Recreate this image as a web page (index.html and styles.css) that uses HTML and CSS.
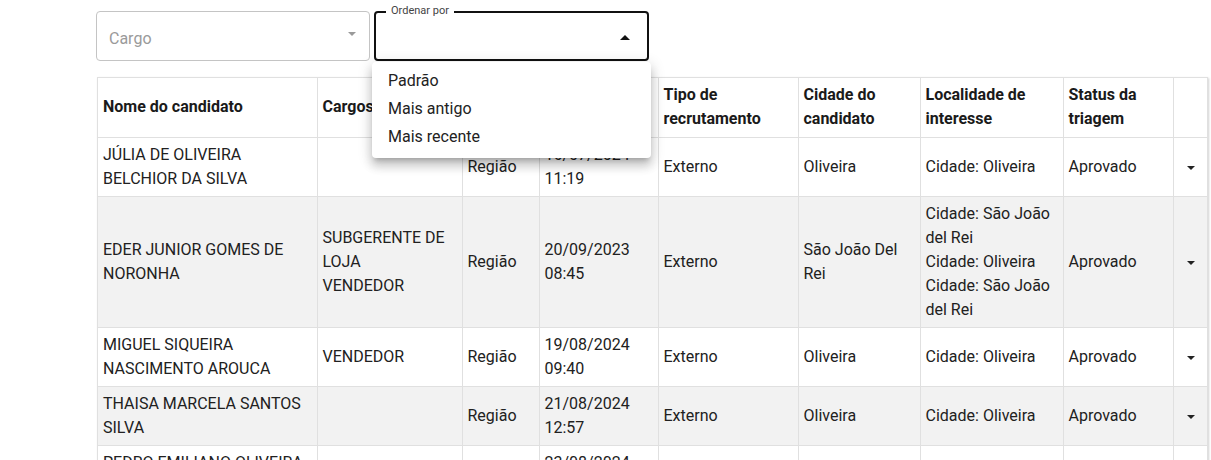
FILE: index.html
```html
<!DOCTYPE html>
<html lang="pt-BR">
<head>
<meta charset="utf-8">
<link rel="stylesheet" href="styles.css">
</head>
<body>
<div class="page">
  <div class="filters">
    <div class="select select-cargo">
      <span class="placeholder">Cargo</span>
      <span class="caret caret-down-gray"></span>
    </div>
    <div class="select-wrap">
      <div class="select select-order">
        <span class="float-label">Ordenar por</span>
        <span class="caret caret-up"></span>
      </div>
      <ul class="menu">
        <li>Padrão</li>
        <li>Mais antigo</li>
        <li>Mais recente</li>
      </ul>
    </div>
  </div>

  <div class="table-box">
    <table class="grid">
      <colgroup>
        <col class="c-nome"><col class="c-cargo"><col class="c-reg"><col class="c-data"><col class="c-tipo"><col class="c-cid"><col class="c-loc"><col class="c-stat"><col class="c-act">
      </colgroup>
      <thead>
        <tr>
          <th>Nome do candidato</th>
          <th>Cargos</th>
          <th>Tipo</th>
          <th>Data</th>
          <th>Tipo de recrutamento</th>
          <th>Cidade do candidato</th>
          <th>Localidade de interesse</th>
          <th>Status da triagem</th>
          <th></th>
        </tr>
      </thead>
      <tbody>
        <tr>
          <td>JÚLIA DE OLIVEIRA BELCHIOR DA SILVA</td>
          <td></td>
          <td>Região</td>
          <td>16/07/2024 11:19</td>
          <td>Externo</td>
          <td>Oliveira</td>
          <td>Cidade: Oliveira</td>
          <td>Aprovado</td>
          <td class="act"><span class="caret caret-down"></span></td>
        </tr>
        <tr>
          <td>EDER JUNIOR GOMES DE NORONHA</td>
          <td>SUBGERENTE DE LOJA<br>VENDEDOR</td>
          <td>Região</td>
          <td>20/09/2023 08:45</td>
          <td>Externo</td>
          <td>São João Del Rei</td>
          <td>Cidade: São João del Rei<br>Cidade: Oliveira<br>Cidade: São João del Rei</td>
          <td>Aprovado</td>
          <td class="act"><span class="caret caret-down"></span></td>
        </tr>
        <tr>
          <td>MIGUEL SIQUEIRA NASCIMENTO AROUCA</td>
          <td>VENDEDOR</td>
          <td>Região</td>
          <td>19/08/2024 09:40</td>
          <td>Externo</td>
          <td>Oliveira</td>
          <td>Cidade: Oliveira</td>
          <td>Aprovado</td>
          <td class="act"><span class="caret caret-down"></span></td>
        </tr>
        <tr>
          <td>THAISA MARCELA SANTOS SILVA</td>
          <td></td>
          <td>Região</td>
          <td>21/08/2024 12:57</td>
          <td>Externo</td>
          <td>Oliveira</td>
          <td>Cidade: Oliveira</td>
          <td>Aprovado</td>
          <td class="act"><span class="caret caret-down"></span></td>
        </tr>
        <tr>
          <td>PEDRO EMILIANO OLIVEIRA DE SOUZA</td>
          <td></td>
          <td>Região</td>
          <td>23/08/2024 10:12</td>
          <td>Externo</td>
          <td>Oliveira</td>
          <td>Cidade: Oliveira</td>
          <td>Aprovado</td>
          <td class="act"><span class="caret caret-down"></span></td>
        </tr>
      </tbody>
    </table>
  </div>
</div>
</body>
</html>
```

FILE: styles.css
```css
html, body {
  margin: 0;
  padding: 0;
  background: #fff;
}
body {
  font-family: Roboto, "Liberation Sans", sans-serif;
  color: #212121;
  overflow: hidden;
  height: 460px;
}
.page {
  padding: 11px 5px 0 96px;
}
.filters {
  display: flex;
  gap: 4px;
  height: 50px;
}
.select {
  box-sizing: border-box;
  height: 50px;
  border-radius: 4px;
  position: relative;
  display: flex;
  align-items: center;
}
.select-cargo {
  width: 274px;
  border: 1px solid #c4c4c4;
  padding: 0 13px 0 12px;
  justify-content: space-between;
}
.placeholder {
  font-size: 16px;
  color: #9a9a9a;
  padding-top: 4px;
}
.select-wrap {
  position: relative;
  width: 275px;
}
.select-order {
  width: 275px;
  border: 2px solid #111;
  justify-content: flex-end;
  padding-right: 17px;
}
.float-label {
  position: absolute;
  top: -9px;
  left: 10px;
  padding: 0 5px;
  background: #fff;
  font-size: 11px;
  line-height: 14px;
  color: #444;
}
.caret {
  display: inline-block;
  width: 0;
  height: 0;
  border-left: 5px solid transparent;
  border-right: 5px solid transparent;
}
.caret-down-gray {
  border-left-width: 4px;
  border-right-width: 4px;
  border-top: 4px solid #9a9a9a;
  margin-top: -4px;
}
.caret-up {
  border-bottom: 5px solid #111;
  margin-top: 3px;
}
.caret-down {
  border-left-width: 4px;
  border-right-width: 4px;
  border-top: 4px solid #222;
}
.menu {
  position: absolute;
  top: 51px;
  left: -2px;
  width: 279px;
  margin: 0;
  padding: 5px 0 7px;
  list-style: none;
  background: #fff;
  border-radius: 4px;
  box-shadow: 0 5px 5px -3px rgba(0,0,0,.2), 0 8px 10px 1px rgba(0,0,0,.14), 0 3px 14px 2px rgba(0,0,0,.12);
  z-index: 10;
}
.menu li {
  height: 28px;
  line-height: 28px;
  padding-left: 16px;
  font-size: 16px;
  color: #222;
}
.table-box {
  margin-top: 16px;
  margin-left: 1px;
  width: 1109px;
  border: 1px solid #e0e0e0;
  box-shadow: 1px 1px 2px rgba(0,0,0,.18);
}
.grid {
  width: 100%;
  table-layout: fixed;
  border-collapse: collapse;
  font-size: 16px;
  line-height: 24px;
}
.c-nome { width: 219px; }
.c-cargo { width: 145px; }
.c-reg { width: 77px; }
.c-data { width: 119px; }
.c-tipo { width: 140px; }
.c-cid { width: 122px; }
.c-loc { width: 143px; }
.c-stat { width: 110px; }
.c-act { width: 34px; }
.grid th, .grid td {
  border: 1px solid #e0e0e0;
  padding: 5px 5px;
  text-align: left;
  vertical-align: middle;
}
.grid tr > :first-child { border-left: 0; }
.grid tr > :last-child { border-right: 0; }
.grid thead tr > * { border-top: 0; }
.grid th {
  font-weight: 700;
  color: #1a1a1a;
  padding-bottom: 6px;
}
.grid tbody tr:nth-child(even) {
  background: #f2f2f2;
}
.grid td.act {
  text-align: center;
  padding: 0;
}
.grid td.act .caret {
  vertical-align: middle;
  margin-left: 2px;
}
```
